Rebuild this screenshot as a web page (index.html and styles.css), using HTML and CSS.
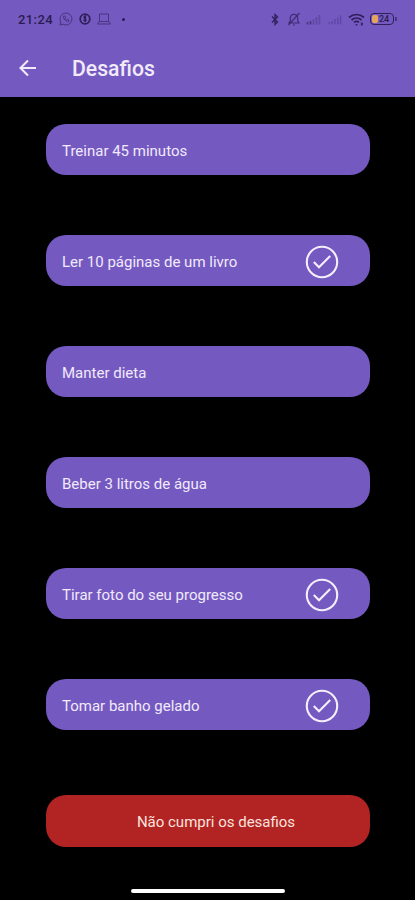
FILE: index.html
```html
<!DOCTYPE html>
<html lang="pt-BR">
    <head>
        <meta charset="UTF-8">
        <meta name="viewport" content="width=device-width, initial-scale=1.0">
        <title>Desafios</title>
        <link rel="stylesheet" href="styles.css">
    </head>
    <body>
        <header>
            <div class="status-bar">
                <span class="time">21:24</span>
                <svg class="whatsapp" width="14" height="14" viewBox="0 0 14 14">
                    <path d="M1 13l.8-3A6 6 0 1 1 4 12.200z"/>
                    <path d="M4.500 4.200c-.5 2.500 2.500 5.500 5.200 5.200l.3-1.300-1.500-.7-.8.700c-.8-.4-1.300-1-1.700-1.800l.6-.7-.6-1.500z"/>
                </svg>
                <svg class="coin" width="12" height="12" viewBox="0 0 12 12">
                    <circle cx="6" cy="6" r="4.800"/>
                    <path d="M4.600 4.800L6.200 3.500V9M4.500 7.200h3"/>
                </svg>
                <svg class="laptop" width="14" height="12" viewBox="0 0 14 12">
                    <path d="M2.500 1h9v7.500h-9zM.5 11h13L12 8.500H2z"/>
                </svg>
                <span class="dot"></span>
                <div class="status-right">
                    <svg class="bluetooth" width="8" height="13" viewBox="0 0 8 13">
                        <path d="M1 3.500l5.500 5.500L4 11.500v-10L6.500 4 1 9.500"/>
                    </svg>
                    <svg class="bell" width="14" height="14" viewBox="0 0 14 14">
                        <path d="M2 11h10l-1.300-2V6C10.700 3.500 9 2.300 7 2.300S3.300 3.500 3.300 6v3zM6 13h2M12.500 1l-11 12"/>
                    </svg>
                    <svg class="signal" width="15" height="11" viewBox="0 0 15 11">
                        <path class="on" d="M1.500 8v2.500M4.500 7v3.500"/>
                        <path d="M7.500 5v5.500M10.500 3v7.500M13.500 1v9.500"/>
                    </svg>
                    <svg class="signal second" width="14" height="11" viewBox="0 0 15 11">
                        <path d="M1.500 8v2.500M4.500 7v3.500M7.500 5v5.500M10.500 3v7.500M13.500 1v9.500"/>
                    </svg>
                    <svg class="wifi" width="17" height="13" viewBox="0 0 17 13">
                        <path d="M1 4.500c4.500-4 10.500-4 15 0M3.500 7c3-2.600 7-2.600 10 0M6 9.300c1.500-1.200 3.500-1.200 5 0"/>
                        <path d="M8.500 11v1.500M13.800 9.500v3"/>
                    </svg>
                    <div class="battery"><span class="level"></span>24</div>
                </div>
            </div>
            <div class="toolbar">
                <svg class="back" width="18" height="18" viewBox="0 0 18 18">
                    <path d="M17 9H1.800M9 1.500L1.500 9 9 16.500"/>
                </svg>
                <h1>Desafios</h1>
            </div>
        </header>

        <main>
            <div class="challenge">Treinar 45 minutos</div>
            <div class="challenge">
                Ler 10 páginas de um livro
                <svg class="check" width="34" height="34" viewBox="0 0 34 34">
                    <circle cx="17" cy="17" r="15.200"/>
                    <path d="M8.800 17l5.200 5.300L25.200 11"/>
                </svg>
            </div>
            <div class="challenge">Manter dieta</div>
            <div class="challenge">Beber 3 litros de água</div>
            <div class="challenge">
                Tirar foto do seu progresso
                <svg class="check" width="34" height="34" viewBox="0 0 34 34">
                    <circle cx="17" cy="17" r="15.200"/>
                    <path d="M8.800 17l5.200 5.300L25.200 11"/>
                </svg>
            </div>
            <div class="challenge">
                Tomar banho gelado
                <svg class="check" width="34" height="34" viewBox="0 0 34 34">
                    <circle cx="17" cy="17" r="15.200"/>
                    <path d="M8.800 17l5.200 5.300L25.200 11"/>
                </svg>
            </div>
            <button class="fail">Não cumpri os desafios</button>
        </main>

        <div class="home-bar"></div>
    </body>
</html>
```

FILE: styles.css
```css
* {
    box-sizing: border-box;
}

body {
    margin: 0;
    height: 900px;
    display: flex;
    flex-direction: column;
    background-color: #000;
    color: #f1eafa;
    font-family: Roboto, sans-serif;
    overflow: hidden;
}

svg {
    fill: none;
    flex-shrink: 0;
}

header {
    height: 97px;
    background-color: #7459c1;
}

.status-bar {
    height: 38px;
    padding: 0 21px 0 18px;
    display: flex;
    align-items: center;
    color: #2a1c50;
    stroke: #2f205a;
}

.time {
    width: 35px;
    font-size: 13px;
    font-weight: 500;
    letter-spacing: 0.4px;
}

.whatsapp {
    margin-left: 6px;
    stroke: #49347f;
}

.coin {
    margin-left: 6px;
    stroke-width: 1.8;
}

.laptop {
    margin-left: 6px;
    stroke: #49347f;
}

.dot {
    width: 3px;
    height: 3px;
    margin-left: 11px;
    border-radius: 50%;
    background-color: #2a1c50;
}

.status-right {
    margin-left: auto;
    display: flex;
    align-items: center;
}

.bluetooth {
    margin-right: 8px;
    stroke-width: 1.3;
}

.bell {
    margin-right: 5px;
    stroke: #402c73;
    stroke-width: 1.2;
}

.signal {
    margin-right: 7px;
    stroke: #6047a4;
    stroke-width: 1.6;
}

.signal .on {
    stroke: #49347f;
}

.signal.second {
    margin-right: 6px;
}

.wifi {
    margin-right: 5px;
    stroke-width: 1.7;
}

.battery {
    position: relative;
    width: 24px;
    height: 12px;
    border: 1.5px solid #2f205a;
    border-radius: 4px;
    font-size: 9px;
    font-weight: 500;
    line-height: 10px;
    padding-left: 8px;
}

/* battery tip */
.battery::after {
    content: "";
    position: absolute;
    right: -4px;
    top: 3px;
    width: 2px;
    height: 4px;
    background-color: #49347f;
}

.level {
    position: absolute;
    left: 1px;
    top: 1px;
    width: 6px;
    height: 8px;
    border-radius: 2px;
    background-color: #e6a55d;
}

.toolbar {
    height: 59px;
    padding-left: 19px;
    display: flex;
    align-items: center;
}

.back {
    stroke: #f1eafa;
    stroke-width: 2.1;
}

h1 {
    margin: 2px 0 0 35px;
    font-size: 21.2px;
    font-weight: 500;
}

main {
    padding: 27px 45px 0 46px;
    display: flex;
    flex-direction: column;
    gap: 60px;
}

.challenge {
    height: 51px;
    padding: 3px 31px 0 16px;
    display: flex;
    align-items: center;
    justify-content: space-between;
    border-radius: 20px;
    background-color: #7459c1;
    font-size: 15px;
}

.check {
    stroke: #f4effc;
    stroke-width: 2.1;
}

.fail {
    height: 52px;
    margin-top: 5px;
    padding: 2px 0 0 16px;
    border: none;
    border-radius: 20px;
    background-color: #b22323;
    color: #fbe3df;
    font-family: inherit;
    font-size: 15px;
}

.home-bar {
    width: 154px;
    height: 4px;
    margin: 42px auto 0;
    border-radius: 2px;
    background-color: #fff;
}
```
